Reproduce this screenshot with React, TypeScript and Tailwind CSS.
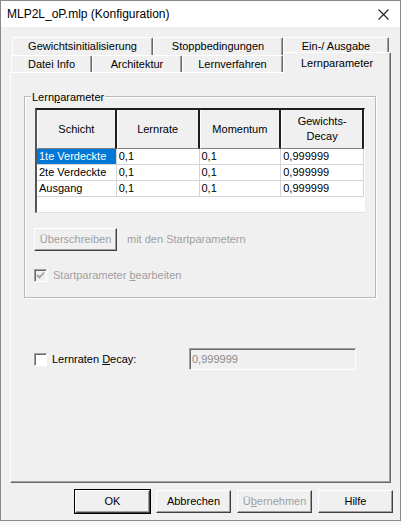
import { ReactNode } from 'react'

function Tab({ label, cls, selected }: { label: string; cls: string; selected?: boolean }) {
  return (
    <div
      className={`${cls} flex items-center justify-center border-l border-t border-white border-r border-r-[#696969] rounded-t-[2px] shadow-[inset_-1px_0_0_#a0a0a0] bg-[#f0f0f0] ${
        selected ? 'relative z-10 -mt-[3px] h-[21px] -mb-[1px] items-start pt-[2px]' : 'h-full'
      }`}
    >
      {label}
    </div>
  )
}

function Btn({ children, cls, disabled, def }: { children: ReactNode; cls: string; disabled?: boolean; def?: boolean }) {
  return (
    <div
      className={`${cls} h-[23px] flex items-center justify-center bg-[#f0f0f0] border border-t-white border-l-white ${
        def ? 'outline outline-1 outline-black' : ''
      } border-r-[#404040] border-b-[#404040] shadow-[inset_-1px_-1px_0_#a0a0a0] ${disabled ? 'text-[#a0a0a0]' : 'text-black'}`}
    >
      {children}
    </div>
  )
}

function Check({ checked, disabled }: { checked?: boolean; disabled?: boolean }) {
  return (
    <div
      className={`w-[13px] h-[13px] border border-t-[#a0a0a0] border-l-[#a0a0a0] border-r-white border-b-white shadow-[inset_1px_1px_0_#696969] flex items-center justify-center ${
        disabled ? 'bg-[#f0f0f0]' : 'bg-white'
      }`}
    >
      {checked && (
        <svg width="9" height="9" viewBox="0 0 9 9">
          <path d="M1 4 L3.5 6.5 L8 1.5" stroke="#a0a0a0" strokeWidth="1.8" fill="none" />
        </svg>
      )}
    </div>
  )
}

const rows = [
  ['1te Verdeckte', '0,1', '0,1', '0,999999'],
  ['2te Verdeckte', '0,1', '0,1', '0,999999'],
  ['Ausgang', '0,1', '0,1', '0,999999'],
]

const colW = ['w-[80px]', 'w-[83px]', 'w-[82px]', 'w-[83px]']

function App() {
  return (
    <div className="w-[401px] h-[525px] bg-[#f7f7f7] font-['Liberation_Sans',Arial,sans-serif] text-[11px] text-black">
      <div className="w-[401px] h-[521px] bg-[#f0f0f0] border border-[#8a8a8a] flex flex-col">
        {/* title bar */}
        <div className="h-[26px] bg-white flex items-center justify-between pl-[6px] pr-[11px] text-[12px]">
          <span>MLP2L_oP.mlp (Konfiguration)</span>
          <svg width="11" height="11" viewBox="0 0 11 11">
            <path d="M0.5 0.5 L10.5 10.5 M10.5 0.5 L0.5 10.5" stroke="#222" strokeWidth="1.1" />
          </svg>
        </div>

        <div className="pl-[9px] pt-[10px]">
          {/* back tab row */}
          <div className="flex h-[18px] ml-[2px]">
            <Tab label="Gewichtsinitialisierung" cls="w-[141px]" />
            <Tab label="Stoppbedingungen" cls="w-[130px]" />
            <Tab label="Ein-/ Ausgabe" cls="w-[106px]" />
          </div>
          {/* front tab row */}
          <div className="flex h-[17px] ml-[1px] items-start">
            <Tab label="Datei Info" cls="w-[81px]" />
            <Tab label="Architektur" cls="w-[90px]" />
            <Tab label="Lernverfahren" cls="w-[101px]" />
            <Tab label="Lernparameter" cls="w-[108px]" selected />
          </div>

          {/* panel */}
          <div className="w-[381px] h-[411px] border border-t-white border-l-white border-r-[#696969] border-b-[#696969] shadow-[inset_-1px_-1px_0_#a0a0a0] pl-[13px] pt-[23px]">
            <div className="relative w-[352px] h-[202px] border border-[#b9b9b9] shadow-[inset_1px_1px_0_#fff,1px_1px_0_#fff] pl-[10px] pt-[11px]">
              <span className="absolute -top-[8px] left-[6px] px-[1px] bg-[#f0f0f0]">
                Lern<span className="underline">p</span>arameter
              </span>

              {/* grid */}
              <div className="w-[330px] h-[105px] bg-white border-t-2 border-l-2 border-t-[#1e1e1e] border-l-[#555] border-r border-b border-r-white border-b-[#e0e0e0] flex flex-col">
                <div className="flex h-[39px] bg-[#f0f0f0]">
                  {['Schicht', 'Lernrate', 'Momentum', 'Gewichts-\nDecay'].map((h, i) => (
                    <div
                      key={h}
                      className={`${colW[i]} h-full flex items-center justify-center text-center whitespace-pre-line leading-[15px] border-l border-l-white border-r-2 border-r-[#1e1e1e] border-b border-b-[#808080]`}
                    >
                      {h}
                    </div>
                  ))}
                </div>
                {rows.map((r, ri) => (
                  <div key={ri} className="flex h-[16px]">
                    {r.map((c, ci) => (
                      <div
                        key={ci}
                        className={`${colW[ci]} h-full flex items-center pl-[2px] border-r border-b border-[#d4d4d4] ${
                          ri === 0 && ci === 0 ? 'bg-[#0078d7] text-white' : ''
                        }`}
                      >
                        {c}
                      </div>
                    ))}
                  </div>
                ))}
              </div>

              <div className="flex items-center mt-[15px] -ml-[1px]">
                <Btn cls="w-[83px]" disabled>
                  Überschreiben
                </Btn>
                <span className="ml-[10px] text-[#a0a0a0]">mit den Startparametern</span>
              </div>

              <div className="flex items-center mt-[16px] -ml-[1px] gap-[6px]">
                <Check checked disabled />
                <span className="text-[#a0a0a0]">
                  Startparameter <span className="underline">b</span>earbeiten
                </span>
              </div>
            </div>

            <div className="flex items-center mt-[50px] ml-[10px]">
              <Check />
              <span className="ml-[5px] w-[137px]">
                Lernraten <span className="underline">D</span>ecay:
              </span>
              <div className="w-[167px] h-[22px] border border-t-[#a0a0a0] border-l-[#a0a0a0] border-r-white border-b-white shadow-[inset_1px_1px_0_#696969] bg-[#f0f0f0] flex items-center pl-[2px] text-[#8a8a8a]">
                0,999999
              </div>
            </div>
          </div>
        </div>

        {/* buttons */}
        <div className="flex justify-end gap-[6px] pr-[7px] mt-[7px]">
          <Btn cls="w-[75px]" def>
            OK
          </Btn>
          <Btn cls="w-[75px]">Abbrechen</Btn>
          <Btn cls="w-[75px]" disabled>
            Ü<span className="underline">b</span>ernehmen
          </Btn>
          <Btn cls="w-[75px]">Hilfe</Btn>
        </div>
      </div>
    </div>
  )
}

export default App
